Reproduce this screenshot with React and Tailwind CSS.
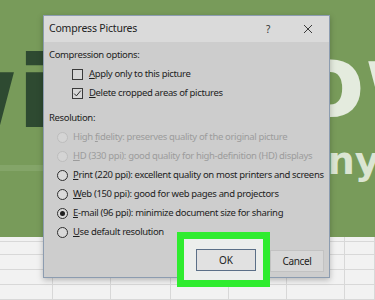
function Radio({ checked, disabled }) {
  return (
    <span
      className={
        disabled
          ? "flex h-[11px] w-[11px] shrink-0 items-center justify-center rounded-full border border-[#bdbdbd] bg-[#d4d4d4]"
          : "flex h-[11px] w-[11px] shrink-0 items-center justify-center rounded-full border border-[#2e2e2e] bg-[#d9d9d9]"
      }
    >
      {checked && <span className="h-[5px] w-[5px] rounded-full bg-[#1f1f1f]" />}
    </span>
  );
}

function Check({ checked }) {
  return (
    <span className="flex h-[11px] w-[11px] shrink-0 items-center justify-center border border-[#3a3a3a] bg-[#d6d6d6]">
      {checked && (
        <svg width="9" height="9" viewBox="0 0 9 9" fill="none">
          <path d="M1.2 4.6 L3.4 6.9 L7.8 1.6" stroke="#2a2a2a" strokeWidth="1" />
        </svg>
      )}
    </span>
  );
}

function RadioRow({ k, rest, checked, disabled }) {
  return (
    <div className="flex h-[19px] items-center gap-[5px] pl-[13px]">
      <Radio checked={checked} disabled={disabled} />
      <span className={disabled ? "whitespace-nowrap text-[#9c9c9c]" : "whitespace-nowrap text-[#1e1e1e]"}>
        <u className="underline-offset-[1px]">{k}</u>
        {rest}
      </span>
    </div>
  );
}

export default function App() {
  return (
    <div className="relative h-[300px] w-[375px] overflow-hidden bg-[#789b5a] font-['Noto_Sans',sans-serif]">
      {/* background letters */}
      <span className="absolute left-[-75px] top-[43px] font-['DejaVu_Sans',sans-serif] text-[100px] font-bold leading-none text-[#2e4a31]">
        wi
      </span>
      <span className="absolute left-[296px] top-[37px] font-['DejaVu_Sans',sans-serif] text-[100px] font-bold leading-[0.9] text-[#e4ebde]">
        ow
      </span>
      <span className="absolute left-[302px] top-[144px] font-['DejaVu_Sans',sans-serif] text-[38px] font-bold leading-[0.9] text-[#dbe5d2]">
        anything
      </span>
      <div className="absolute left-0 top-[165px] h-[6px] w-[45px] bg-[#84a569]" />

      {/* spreadsheet grid */}
      <div className="absolute left-0 top-[237px] flex h-[63px] w-[375px] flex-col bg-[#f2f2f2]">
        {[6, 17, 19, 19, 19].map((h, i) => (
          <div key={i} className="flex border-b border-[#d8d8d8]" style={{ height: h }}>
            {[53, 58, 60, 58, 58, 58, 30].map((w, j) => (
              <div key={j} className="shrink-0 border-r border-[#d8d8d8]" style={{ width: w }} />
            ))}
          </div>
        ))}
      </div>

      {/* dialog */}
      <div className="absolute left-[43px] top-[15px] flex h-[263px] w-[287px] flex-col border border-[#8c9cb0] bg-[#cdcdcd] text-[9.5px] tracking-[-0.35px] text-[#1e1e1e] shadow-[0_2px_6px_rgba(0,0,0,0.25)]">
        <div className="flex h-[26px] shrink-0 items-center bg-[#dadada] pl-[5px]">
          <span className="text-[10.5px] tracking-[-0.2px] text-[#222]">Compress Pictures</span>
          <span className="ml-auto flex w-[20px] justify-center text-[10px] text-[#333]">?</span>
          <span className="ml-[20px] mr-[11px] flex w-[20px] justify-center">
            <svg width="10" height="10" viewBox="0 0 10 10" fill="none">
              <path d="M1 1 L9 9 M9 1 L1 9" stroke="#3a3a3a" strokeWidth="1" />
            </svg>
          </span>
        </div>
        <div className="flex flex-col pt-[4px]">
          <div className="flex h-[19px] items-center pl-[5px]">Compression options:</div>
          <div className="flex h-[19px] items-center gap-[6px] pl-[28px]">
            <Check />
            <span className="whitespace-nowrap">
              <u className="underline-offset-[1px]">A</u>pply only to this picture
            </span>
          </div>
          <div className="flex h-[19px] items-center gap-[6px] pl-[28px]">
            <Check checked />
            <span className="whitespace-nowrap">
              <u className="underline-offset-[1px]">D</u>elete cropped areas of pictures
            </span>
          </div>
          <div className="mt-[6px] flex h-[19px] items-center pl-[5px]">Resolution:</div>
          <RadioRow disabled k="" rest={<>High <u className="underline-offset-[1px]">f</u>idelity: preserves quality of the original picture</>} />
          <RadioRow disabled k="H" rest="D (330 ppi): good quality for high-definition (HD) displays" />
          <RadioRow k="P" rest="rint (220 ppi): excellent quality on most printers and screens" />
          <RadioRow k="W" rest="eb (150 ppi): good for web pages and projectors" />
          <RadioRow checked k="E" rest="-mail (96 ppi): minimize document size for sharing" />
          <RadioRow k="U" rest="se default resolution" />
        </div>
        <div className="mt-[8px] flex justify-end pr-[5px]">
          <button className="flex h-[22px] w-[54px] items-center justify-center border border-[#c2c2c2] bg-[#d7d7d7] text-[10px] text-[#222]">
            Cancel
          </button>
        </div>
      </div>

      {/* highlight around OK */}
      <div className="absolute left-[177px] top-[232px] h-[55px] w-[93px] border-[7px] border-[#2fec2f] bg-[#eceeec] pl-[12px] pt-[10px]">
        <button className="flex h-[22px] w-[60px] items-center justify-center border border-[#5b6f87] bg-[#e1e1e1] text-[10px] text-[#222]">
          OK
        </button>
      </div>
    </div>
  );
}
